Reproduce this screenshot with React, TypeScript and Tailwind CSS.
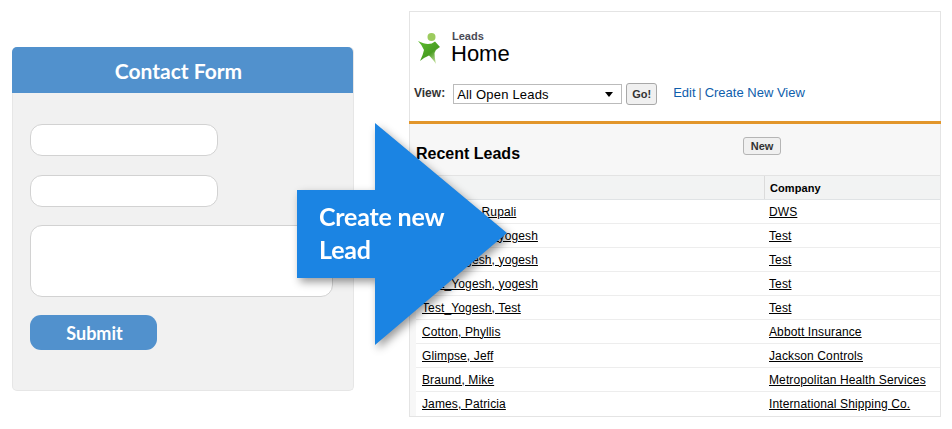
const leads = [
  { name: 'Test_Yogi, Rupali', company: 'DWS' },
  { name: 'Test_Yogesh, yogesh', company: 'Test' },
  { name: 'Test_Yogesh, yogesh', company: 'Test' },
  { name: 'Test_Yogesh, yogesh', company: 'Test' },
  { name: 'Test_Yogesh, Test', company: 'Test' },
  { name: 'Cotton, Phyllis', company: 'Abbott Insurance' },
  { name: 'Glimpse, Jeff', company: 'Jackson Controls' },
  { name: 'Braund, Mike', company: 'Metropolitan Health Services' },
  { name: 'James, Patricia', company: 'International Shipping Co.' },
];

function LeadIcon() {
  return (
    <svg width="28" height="36" viewBox="0 0 28 36" className="shrink-0">
      <defs>
        <linearGradient id="star" x1="0" y1="0" x2="0.8" y2="1">
          <stop offset="0" stopColor="#5cbc2e" />
          <stop offset="0.6" stopColor="#4a9e22" />
          <stop offset="1" stopColor="#d3e8ae" />
        </linearGradient>
      </defs>
      <circle cx="15.5" cy="7" r="4" fill="#9ccb5e" />
      <path d="M2 11 Q8 14 12 14 Q16 14 19 11.5 L24 17 Q20 19 18.5 23 Q18.5 28 20 34 Q16 28 13 25.5 Q9 27 4 31 Q7 25 8 20 Q6 15 2 11 Z" fill="url(#star)" />
    </svg>
  );
}

function ContactForm() {
  const fieldClass = 'block bg-white border border-[#d2d2d2] rounded-[12px]';
  return (
    <div className="w-[342px] h-[344px] mt-[47px] ml-3 bg-[#f1f1f1] border border-[#e6e6e6] border-t-0 rounded-[5px]">
      <div className="h-[46px] -ml-px rounded-t-[5px] bg-[#5191cd] flex items-center justify-center pr-2 pt-px font-['Lato',sans-serif] text-[21px] font-bold text-white">
        Contact Form
      </div>
      <div className="pl-[17px] pt-[31px] flex flex-col">
        <div className={`${fieldClass} w-[188px] h-8`}></div>
        <div className={`${fieldClass} w-[188px] h-8 mt-[19px]`}></div>
        <div className={`${fieldClass} w-[303px] h-[72px] mt-[18px]`}></div>
        <div className="w-[127px] h-[35px] mt-[18px] bg-[#5191cd] rounded-[11px] flex items-center justify-center pt-0.5 pl-[2px] font-['Lato',sans-serif] text-[18px] font-bold text-white">
          Submit
        </div>
      </div>
    </div>
  );
}

function LeadsPanel() {
  return (
    <div className="w-[532px] h-[406px] mt-[11px] ml-[55px] bg-white border border-[#e4e4e4] font-['Liberation_Sans',sans-serif] flex flex-col">
      <div className="h-[109px] shrink-0">
        <div className="flex items-center pl-[6px] pt-[18px] gap-[7px]">
          <LeadIcon />
          <div className="flex flex-col">
            <span className="text-[11px] leading-[12px] font-bold pl-px text-[#4a4a56]">Leads</span>
            <span className="text-[22px] leading-[24px] text-black">Home</span>
          </div>
        </div>
        <div className="flex items-center pl-1 mt-[17px]">
          <span className="text-[12px] font-bold text-[#333] -mt-[3px]">View:</span>
          <div className="w-[169px] h-5 ml-[8px] border border-[#bbb] bg-white flex items-center justify-between pl-[3px] pr-2">
            <span className="text-[13px] tracking-[0.2px] pt-px text-black">All Open Leads</span>
            <span className="w-0 h-0 border-x-[4px] border-x-transparent border-t-[5px] border-t-black"></span>
          </div>
          <div className="w-[31px] h-[22px] ml-1 border border-[#a8a8a8] rounded-[3px] bg-[#f0f0f0] flex items-center justify-center text-[11px] font-bold text-[#333]">
            Go!
          </div>
          <div className="flex items-center -mt-[3px]">
            <span className="ml-[16px] text-[13px] text-[#0e5eac]">Edit</span>
            <span className="mx-[3px] text-[12px] text-[#555]">|</span>
            <span className="text-[13px] text-[#0e5eac]">Create New View</span>
          </div>
        </div>
      </div>
      <div className="h-[3px] shrink-0 bg-[#e2962b] -ml-px -mr-px"></div>
      <div className="flex-1 bg-[#f7f7f7] flex flex-col min-h-0">
        <div className="h-[51px] shrink-0 relative flex items-center pl-[6px]">
          <span className="text-[16px] font-bold text-black mt-[9px]">Recent Leads</span>
          <div className="absolute left-[333px] top-[13px] w-[38px] h-[18px] border border-[#b5b5b5] rounded-[3px] bg-[#f0f0f0] flex items-center justify-center text-[11px] font-bold text-[#333]">
            New
          </div>
        </div>
        <div className="ml-[6px] flex-1 flex flex-col bg-white border-t border-[#e3e3e3]">
          <div className="h-6 shrink-0 bg-[#f2f3f3] border-b border-[#e0e3e5] flex">
            <div className="w-[349px] border-r border-[#dbdbdb]"></div>
            <div className="pl-[5px] pt-px flex items-center text-[11px] font-bold tracking-[0.1px] text-black">Company</div>
          </div>
          {leads.map((lead, i) => (
            <div key={i} className="h-6 shrink-0 flex items-center border-b border-[#ededed] last:border-b-0 text-[12px] tracking-[0.12px] text-black">
              <span className="w-[348px] pl-[6px] underline">{lead.name}</span>
              <span className="pl-[5px] underline">{lead.company}</span>
            </div>
          ))}
        </div>
      </div>
    </div>
  );
}

function Arrow() {
  return (
    <div className="absolute left-[297px] top-[123px] w-[211px] h-[222px] drop-shadow-[3px_4px_4px_rgba(0,0,0,0.4)]">
      <svg width="211" height="222" viewBox="0 0 211 222" className="absolute inset-0">
        <path d="M0 67 H78 V0 L210 110 L78 222 V155 H0 Z" fill="#1b84e3" />
      </svg>
      <div className="absolute left-[22px] top-[77px] font-['Lato',sans-serif] text-[25px] leading-[33px] font-bold tracking-[-0.2px] text-white">
        Create new
        <br />
        Lead
      </div>
    </div>
  );
}

export default function App() {
  return (
    <div className="relative w-[952px] h-[429px] bg-white flex items-start overflow-hidden">
      <ContactForm />
      <LeadsPanel />
      <Arrow />
    </div>
  );
}
